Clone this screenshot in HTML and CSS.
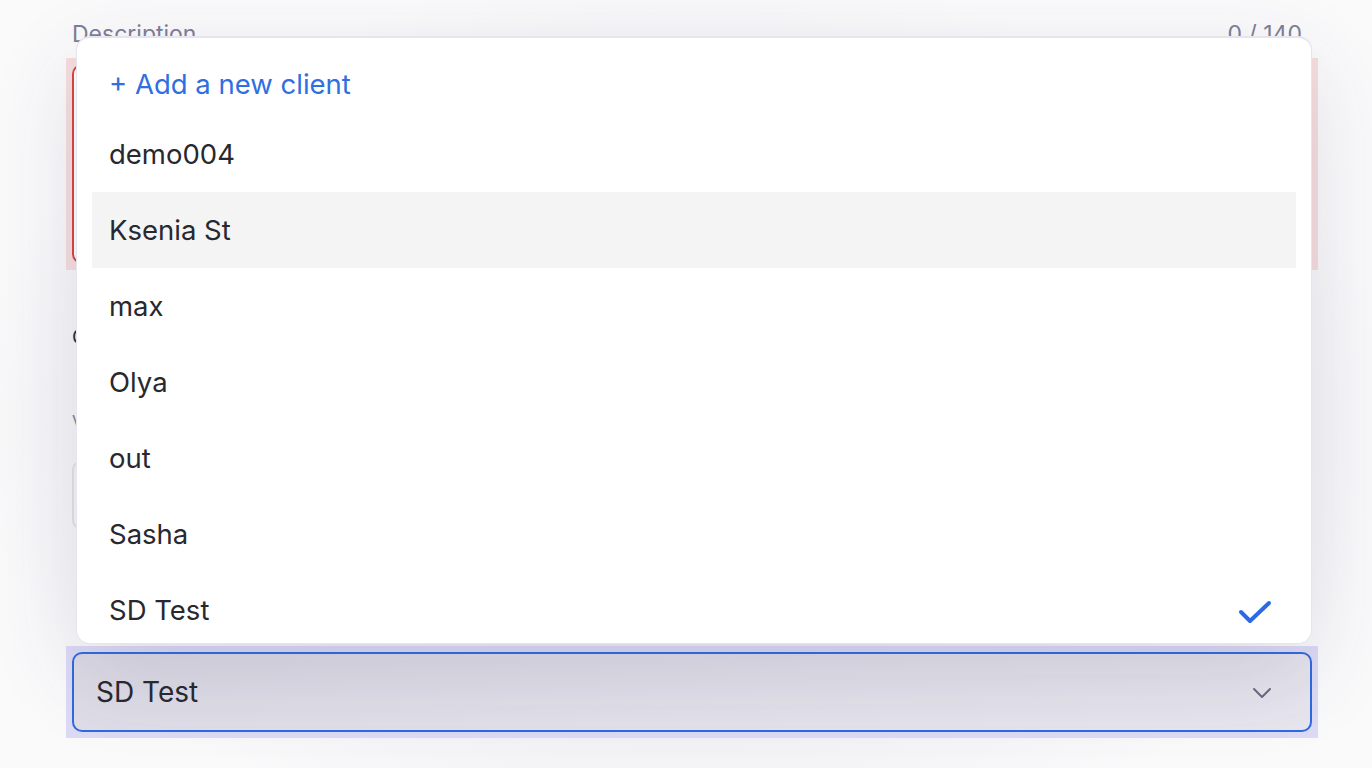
FILE: index.html
```html
<!DOCTYPE HTML>
<html>
    <head>
        <link rel="stylesheet" href="styles.css">
    </head>

    <body>
        <div class="page">
            <form class="form">
                <div class="field-head">
                    <span class="label">Description</span>
                    <span class="counter">0 / 140</span>
                </div>
                <div class="ring ring-error">
                    <div class="textarea"></div>
                </div>

                <div class="label label-gap">Category</div>
                <div class="label label-small">Value</div>
                <div class="input"></div>

                <div class="ring ring-focus">
                    <div class="select">
                        <span>SD Test</span>
                        <svg class="chevron" width="20" height="12" viewBox="0 0 20 12">
                            <path d="M2 2 L10 10 L18 2" fill="none" stroke="#6b6880" stroke-width="2" stroke-linecap="round" stroke-linejoin="round"/>
                        </svg>
                    </div>
                </div>
            </form>

            <div class="menu">
                <div class="option add">+ Add a new client</div>
                <div class="option">demo004</div>
                <div class="option hover">Ksenia St</div>
                <div class="option">max</div>
                <div class="option">Olya</div>
                <div class="option">out</div>
                <div class="option">Sasha</div>
                <div class="option selected">
                    <span>SD Test</span>
                    <svg class="check" width="34" height="26" viewBox="0 0 34 26">
                        <path d="M3 13 L12 22 L31 4" fill="none" stroke="#2a6ae6" stroke-width="4" stroke-linecap="round" stroke-linejoin="round"/>
                    </svg>
                </div>
            </div>
        </div>
    </body>
</html>
```

FILE: styles.css
```css
body{
    margin:0;
    background-color:#fafafb;
    font-family:Inter, "Noto Sans", sans-serif;
    color:#28282f;
}

.page{
    position:relative;
    height:768px;
    overflow:hidden;
    background:radial-gradient(ellipse at 50% 55%, #ebebf0 0%, #efeff3 45%, #fafafb 75%);
}

.form{
    width:1252px;
    margin-left:66px;
    padding-top:20px;
}

.field-head{
    display:flex;
    justify-content:space-between;
    padding:0 16px 0 6px;
}

.label{
    font-size:23px;
    line-height:28px;
    color:#7f7d96;
}

.counter{
    font-size:23px;
    line-height:28px;
    color:#7f7d96;
}

.ring{
    padding:6px;
}

.ring-error{
    margin-top:10px;
    background:#f6dede;
}

.ring-focus{
    margin-top:116px;
    background:#dcdaf5;
}

.textarea{
    height:200px;
    box-sizing:border-box;
    border:2px solid #d9453f;
    border-radius:10px;
    background:#fff;
}

.label-gap{
    margin-top:54px;
    margin-left:6px;
    font-size:20px;
    line-height:26px;
    color:#2a2a33;
}

.label-small{
    margin-top:60px;
    margin-left:6px;
    font-size:16px;
    line-height:22px;
}

.input{
    margin:28px 6px 0 6px;
    height:70px;
    box-sizing:border-box;
    border:2px solid #e2e1e8;
    border-radius:10px;
}

.select{
    height:80px;
    box-sizing:border-box;
    border:2px solid #2f6ae0;
    border-radius:10px;
    background:linear-gradient(170deg, #dcdae4 0%, #e8e6ee 100%);
    display:flex;
    align-items:center;
    justify-content:space-between;
    padding:0 38px 0 22px;
    font-size:28px;
}

.chevron{
    margin-top:2px;
}

.menu{
    position:absolute;
    top:36px;
    left:76px;
    width:1236px;
    height:608px;
    box-sizing:border-box;
    overflow:hidden;
    background:#fff;
    border:1px solid #e6e5ee;
    border-top-width:2px;
    border-radius:14px;
    box-shadow:0 30px 90px rgba(60,55,100,0.14);
    padding:14px 15px 0 15px;
}

.option{
    height:76px;
    display:flex;
    align-items:center;
    justify-content:space-between;
    padding:0 24px 0 17px;
    font-size:27.5px;
}

.add{
    height:64px;
    color:#2f6fe0;
}

.hover{
    background:#f4f4f4;
}

.check{
    margin-top:4px;
}
```
